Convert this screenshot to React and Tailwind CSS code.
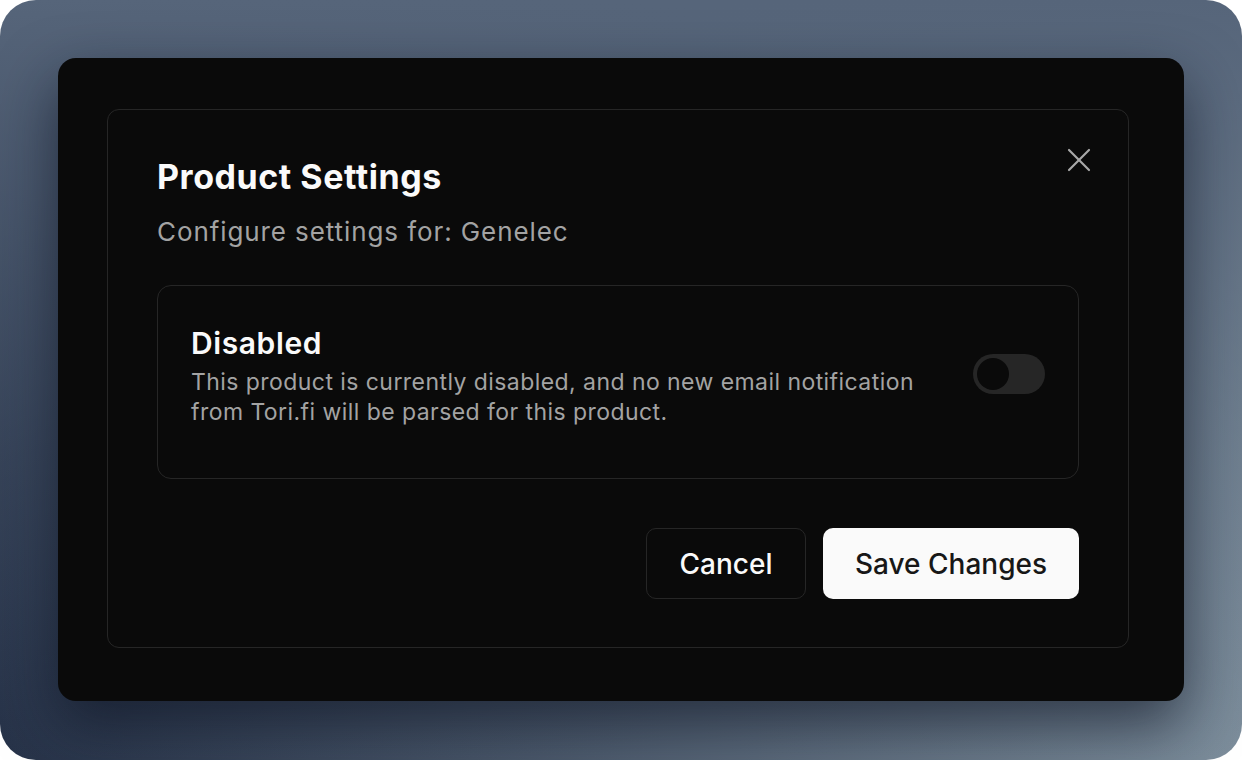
import { X } from 'lucide-react';

function Toggle() {
    return (
        <div className='w-[72px] h-[40px] rounded-full bg-[#262626] p-[4px] shrink-0 -mt-[3px]'>
            <div className='w-[32px] h-[32px] rounded-full bg-[#0a0a0a]'></div>
        </div>
    )
}

function SettingCard() {
    return (
        <div className='mt-[37px] h-[194px] rounded-[14px] border border-[#262626] pl-[33px] pr-[33px] pt-[38px] pb-[51px] flex items-center justify-between'>
            <div className='w-[745px]'>
                <div className='text-[30px] leading-[36px] font-semibold tracking-[0.02em] text-[#fafafa]'>Disabled</div>
                <p className='mt-[6px] text-[23px] leading-[30px] tracking-[0.019em] text-[#a3a3a3]'>
                    This product is currently disabled, and no new email notification from Tori.fi will be parsed for this product.
                </p>
            </div>
            <Toggle />
        </div>
    )
}

export default function App() {
    return (
        <div className='w-[1242px] h-[760px] bg-white' style={{ fontFamily: 'Inter, "Noto Sans", sans-serif' }}>
            <div className='h-full rounded-[36px] bg-[linear-gradient(to_bottom,#56657a_0%,rgba(86,101,122,0.35)_60%,rgba(86,101,122,0)_100%),linear-gradient(to_right,#263248,#7d8e9c)] pt-[58px] pl-[58px]'>
                <div className='w-[1126px] h-[643px] rounded-[18px] bg-[#0a0a0a] shadow-[0_24px_60px_rgba(12,18,34,0.65)] pt-[51px] pl-[49px]'>
                    <div className='relative w-[1022px] h-[539px] rounded-[12px] border border-[#262626] px-[49px] pt-[47px]'>
                        <button className='absolute right-[29px] top-[30px] text-[#a8a8a8]'>
                            <X size={40} strokeWidth={1.3} />
                        </button>
                        <h2 className='text-[34px] leading-[40px] font-bold tracking-[0.016em] text-[#fafafa]'>Product Settings</h2>
                        <p className='mt-[19px] text-[26px] leading-[32px] tracking-[0.035em] text-[#a3a3a3]'>Configure settings for: Genelec</p>
                        <SettingCard />
                        <div className='mt-[49px] flex justify-end gap-[17px]'>
                            <button className='w-[160px] h-[71px] rounded-[10px] border border-[#262626] text-[28px] font-medium text-[#fafafa]'>Cancel</button>
                            <button className='w-[256px] h-[71px] rounded-[10px] bg-[#fafafa] text-[28px] font-medium text-[#171717]'>Save Changes</button>
                        </div>
                    </div>
                </div>
            </div>
        </div>
    )
}
